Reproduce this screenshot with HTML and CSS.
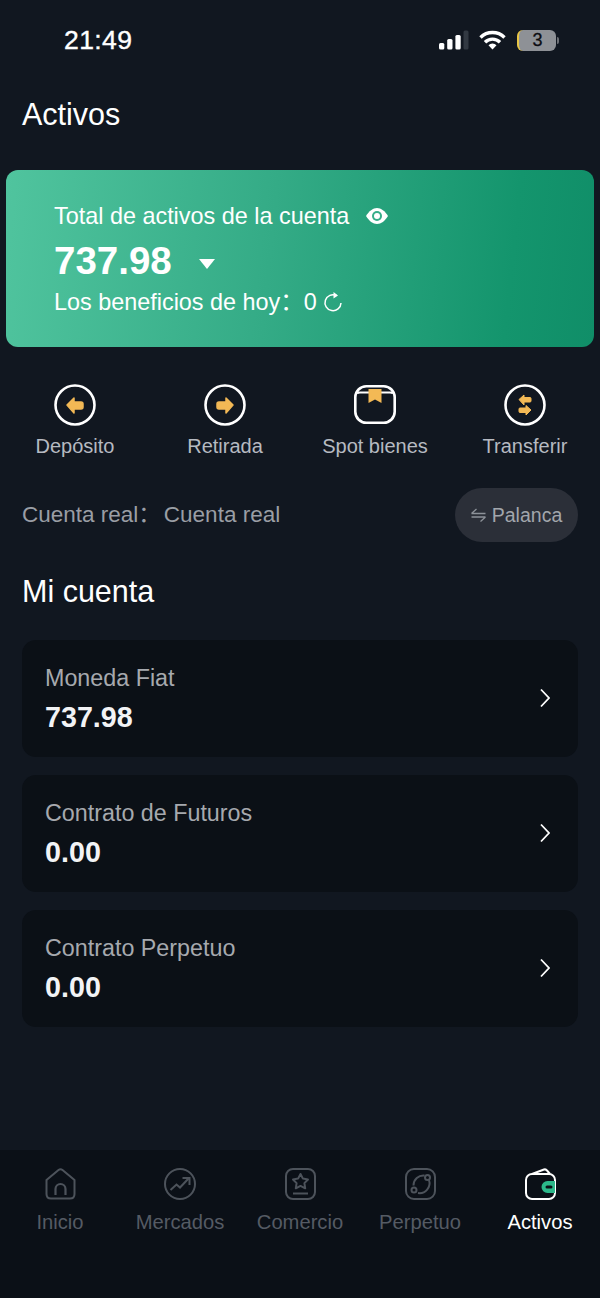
FILE: index.html
```html
<!DOCTYPE html>
<html lang="es">
<head>
<meta charset="utf-8">
<title>Activos</title>
<link rel="stylesheet" href="styles.css">
</head>
<body>
<div class="page">
  <div class="status">
    <span class="time">21:49</span>
    <div class="status-icons">
      <svg class="signal" width="30" height="20" viewBox="0 0 30 20"><rect x="0" y="13" width="5.300" height="6.500" rx="1.500" fill="#fff"/><rect x="8.200" y="9" width="5.300" height="10.500" rx="1.500" fill="#fff"/><rect x="16.400" y="5" width="5.300" height="14.500" rx="1.500" fill="#fff"/><rect x="24.500" y="0.500" width="5" height="19" rx="1.500" fill="#323942"/></svg>
      <svg class="wifi" width="27" height="20" viewBox="0 0 27 20" fill="none" stroke="#fff" stroke-width="3.400"><path d="M1.500 7.500a17 17 0 0 1 24 0"/><path d="M6 12.300a10.500 10.500 0 0 1 15 0"/><path d="M13.500 19.500l-4-4.300a5.800 5.800 0 0 1 8 0z" fill="#fff" stroke="none"/></svg>
      <div class="battery"><span class="battery-num">3</span></div>
      <span class="battery-tip"></span>
    </div>
  </div>
  <h1 class="title">Activos</h1>

  <section class="hero">
    <div class="hero-label"><span>Total de activos de la cuenta</span>
      <svg width="24" height="18" viewBox="0 0 24 18"><path d="M1 9c3-5 7-8 11-8s8 3 11 8c-3 5-7 8-11 8S4 14 1 9z" fill="#fff"/><circle cx="12" cy="9" r="5" fill="#35ad89"/><circle cx="12" cy="9" r="3" fill="#fff"/></svg>
    </div>
    <div class="hero-amount"><span>737.98</span><span class="caret"></span></div>
    <div class="hero-profit"><span>Los beneficios de hoy：0</span>
      <svg width="20" height="22" viewBox="0 0 20 22" fill="none" stroke="#fff" stroke-width="1.500"><path d="M13.500 4.500a8 8 0 1 0 4.500 7.500"/><path d="M10.500 1l4.500 3.500-4.500 3" fill="#fff" stroke="none"/></svg>
    </div>
  </section>

  <nav class="actions">
    <div class="action">
      <svg width="42" height="42" viewBox="0 0 42 42"><circle cx="21" cy="21" r="19.500" fill="none" stroke="#fff" stroke-width="2.600"/><path d="M13 21l7-7v4h7q2 0 2 2v3q0 2-2 2h-7v4z" fill="#f3b955" stroke="#f3b955" stroke-linejoin="round" stroke-width="1.500"/></svg>
      <span>Depósito</span>
    </div>
    <div class="action">
      <svg width="42" height="42" viewBox="0 0 42 42"><circle cx="21" cy="21" r="19.500" fill="none" stroke="#fff" stroke-width="2.600"/><path d="M29 21l-7-7v4h-7q-2 0-2 2v3q0 2 2 2h7v4z" fill="#f3b955" stroke="#f3b955" stroke-linejoin="round" stroke-width="1.500"/></svg>
      <span>Retirada</span>
    </div>
    <div class="action">
      <svg width="42" height="42" viewBox="0 0 42 42"><rect x="1.300" y="2.300" width="39.400" height="36.400" rx="11" fill="none" stroke="#fff" stroke-width="2.600"/><path d="M3 9.500q1 -1 3-1h30q2 0 3 1" fill="none" stroke="#fff" stroke-width="2"/><path d="M14.500 5h13v14l-6.500-3.500-6.500 3.500z" fill="#f3b955"/></svg>
      <span>Spot bienes</span>
    </div>
    <div class="action">
      <svg width="42" height="42" viewBox="0 0 42 42"><circle cx="21" cy="21" r="19.500" fill="none" stroke="#fff" stroke-width="2.600"/><path d="M15 15.500l5-4.500v2.500h6q1 0 1 1v2.500q0 1-1 1h-6V21zM27 26l-5-4.500V24h-6q-1 0-1 1v2.500q0 1 1 1h6V31z" fill="#f3b955" stroke="#f3b955" stroke-linejoin="round"/></svg>
      <span>Transferir</span>
    </div>
  </nav>

  <div class="account-row">
    <span class="account-text">Cuenta real<span class="account-sep">：</span>Cuenta real</span>
    <button class="pill">
      <svg width="15" height="14" viewBox="0 0 15 14" fill="none" stroke="#8d9299" stroke-width="1.300"><path d="M0.500 5.500h14M0.500 5.500l5-4.500M14.500 9h-14M14.500 9l-5 4.500"/></svg>
      <span>Palanca</span>
    </button>
  </div>

  <h2 class="section-title">Mi cuenta</h2>

  <div class="list">
    <a class="row"><div class="row-text"><div class="row-label">Moneda Fiat</div><div class="row-value">737.98</div></div>
      <svg class="chevron" width="10" height="20" viewBox="0 0 10 20" fill="none" stroke="#fff" stroke-width="1.800"><path d="M1 1.500l8 8.500-8 8.500"/></svg></a>
    <a class="row"><div class="row-text"><div class="row-label">Contrato de Futuros</div><div class="row-value">0.00</div></div>
      <svg class="chevron" width="10" height="20" viewBox="0 0 10 20" fill="none" stroke="#fff" stroke-width="1.800"><path d="M1 1.500l8 8.500-8 8.500"/></svg></a>
    <a class="row"><div class="row-text"><div class="row-label">Contrato Perpetuo</div><div class="row-value">0.00</div></div>
      <svg class="chevron" width="10" height="20" viewBox="0 0 10 20" fill="none" stroke="#fff" stroke-width="1.800"><path d="M1 1.500l8 8.500-8 8.500"/></svg></a>
  </div>

  <footer class="tabs">
    <div class="tab">
      <svg width="31" height="32" viewBox="0 0 31 32" fill="none" stroke="#4d535b" stroke-width="2" stroke-linejoin="round"><path d="M1.500 12L13.500 2q2-1.500 4 0l12 10v14q0 4.500-4.500 4.500H6q-4.500 0-4.500-4.500z"/><path d="M10.500 27v-6a5 5 0 0 1 10 0v6" stroke-width="2.200"/></svg>
      <span>Inicio</span>
    </div>
    <div class="tab">
      <svg width="32" height="32" viewBox="0 0 32 32" fill="none" stroke="#4d535b" stroke-width="2"><circle cx="16" cy="16" r="15"/><path d="M6.500 22l6-5.500 3.500 3 9-9.500"/><path d="M18.500 10h7v7"/></svg>
      <span>Mercados</span>
    </div>
    <div class="tab">
      <svg width="31" height="32" viewBox="0 0 31 32" fill="none" stroke="#4d535b" stroke-width="2" stroke-linejoin="round"><rect x="1" y="1" width="29" height="30" rx="7"/><path d="M15.500 6l2.400 4.600 5.100.9-3.600 3.600.8 5.200-4.700-2.400-4.700 2.400.8-5.200-3.600-3.600 5.100-.9z"/><path d="M8 25.500h15"/></svg>
      <span>Comercio</span>
    </div>
    <div class="tab">
      <svg width="31" height="32" viewBox="0 0 31 32" fill="none" stroke="#4d535b" stroke-width="2"><rect x="1" y="1" width="29" height="30" rx="8"/><path d="M19.500 7.500a10 10 0 0 0-11 10M24 12a10 10 0 0 1-11 13"/><circle cx="22.500" cy="9.500" r="2.500"/><circle cx="9" cy="22" r="2.500"/></svg>
      <span>Perpetuo</span>
    </div>
    <div class="tab tab-active">
      <svg width="31" height="32" viewBox="0 0 31 32" fill="none" stroke="#fff" stroke-width="2" stroke-linejoin="round"><rect x="1" y="6" width="29" height="25" rx="6"/><path d="M7 6l12-4.500q2-.5 3 1L25 6"/><path d="M30 13h-7.500a5.500 5.500 0 0 0 0 12H30z" fill="#2cb88a" stroke="none"/><rect x="20.500" y="17.500" width="7" height="3" rx="1.500" fill="#0b1016" stroke="none"/></svg>
      <span>Activos</span>
    </div>
  </footer>
</div>
</body>
</html>
```
FILE: styles.css
```css
* { box-sizing: border-box; }
html, body { margin: 0; padding: 0; }
body {
  background: #111720;
  font-family: "Liberation Sans", "Noto Sans CJK SC", Arial, sans-serif;
  color: #fff;
}
.page {
  width: 600px;
  height: 1298px;
  display: flex;
  flex-direction: column;
  overflow: hidden;
}
.status {
  height: 80px;
  padding: 0 41px 0 64px;
  display: flex;
  align-items: center;
  justify-content: space-between;
}
.time { font-size: 26.500px; letter-spacing: 0.4px; -webkit-text-stroke: 0.4px #fff; }
.status-icons { display: flex; align-items: center; }
.signal { margin-right: 10px; }
.wifi { margin-right: 11px; }
.battery {
  width: 39px;
  height: 21px;
  border-radius: 6px;
  background: #8e9196;
  border-left: 2px solid #e8c545;
  display: flex;
  align-items: center;
  justify-content: center;
}
.battery-num { color: #0b0d12; font-size: 18px; -webkit-text-stroke: 0.3px #0b0d12; }
.battery-tip {
  width: 2px;
  height: 7px;
  margin-left: 1px;
  background: #6e7176;
  border-radius: 0 2px 2px 0;
}
.title {
  margin: 17px 0 0;
  padding-left: 22px;
  font-size: 30.500px;
  line-height: 34px;
  font-weight: 400;
}
.hero {
  margin: 39px 6px 0;
  height: 177px;
  padding: 33px 48px 0;
  border-radius: 12px;
  background: linear-gradient(96deg, #50c49e 0%, #34ab86 45%, #14956d 85%, #108e68 100%);
}
.hero-label {
  display: flex;
  align-items: center;
  gap: 16px;
  font-size: 23.400px;
  line-height: 26px;
}
.hero-amount {
  display: flex;
  align-items: center;
  margin-top: 10px;
  font-size: 38.500px;
  line-height: 44px;
  font-weight: 700;
}
.caret {
  margin: 5px 0 0 27px;
  border-left: 8px solid transparent;
  border-right: 8px solid transparent;
  border-top: 10px solid #fff;
}
.hero-profit {
  display: flex;
  align-items: center;
  gap: 6px;
  margin-top: 5px;
  font-size: 23.400px;
  line-height: 28px;
}
.actions {
  margin-top: 37px;
  display: grid;
  grid-template-columns: repeat(4, 150px);
}
.action {
  display: flex;
  flex-direction: column;
  align-items: center;
  gap: 8px;
  font-size: 20px;
  line-height: 24px;
  color: #b6bac1;
}
.account-row {
  margin-top: 30px;
  padding: 0 22px;
  height: 54px;
  display: flex;
  align-items: center;
  justify-content: space-between;
}
.account-text { font-size: 22.500px; line-height: 28px; color: #9a9ea5; }
.account-sep { margin-right: 3px; }
.pill {
  width: 123px;
  height: 54px;
  border: 0;
  border-radius: 27px;
  background: #2b2f38;
  color: #a2a6ac;
  font: 19.500px "Liberation Sans", Arial, sans-serif;
  display: flex;
  align-items: center;
  justify-content: center;
  gap: 6px;
  padding: 0;
}
.section-title {
  margin: 31px 0 0;
  padding-left: 22px;
  font-size: 30.500px;
  line-height: 36px;
  font-weight: 400;
}
.list {
  margin: 31px 22px 0;
  display: flex;
  flex-direction: column;
  gap: 18px;
}
.row {
  height: 117px;
  border-radius: 14px;
  background: #0b1016;
  padding: 0 28px 0 23px;
  display: flex;
  align-items: center;
  justify-content: space-between;
}
.chevron { margin-bottom: 2px; }
.row-label { font-size: 23.300px; line-height: 28px; color: #a6a9ae; }
.row-value { margin-top: 9px; font-size: 28.700px; line-height: 32px; font-weight: 700; color: #f2f3f5; }
.tabs {
  margin-top: auto;
  height: 148px;
  padding-top: 18px;
  background: #0b1017;
  display: grid;
  grid-template-columns: repeat(5, 120px);
  align-items: start;
}
.tab {
  display: flex;
  flex-direction: column;
  align-items: center;
  gap: 10px;
  font-size: 20.200px;
  line-height: 24px;
  color: #555b64;
}
.tab-active { color: #fff; }
```
